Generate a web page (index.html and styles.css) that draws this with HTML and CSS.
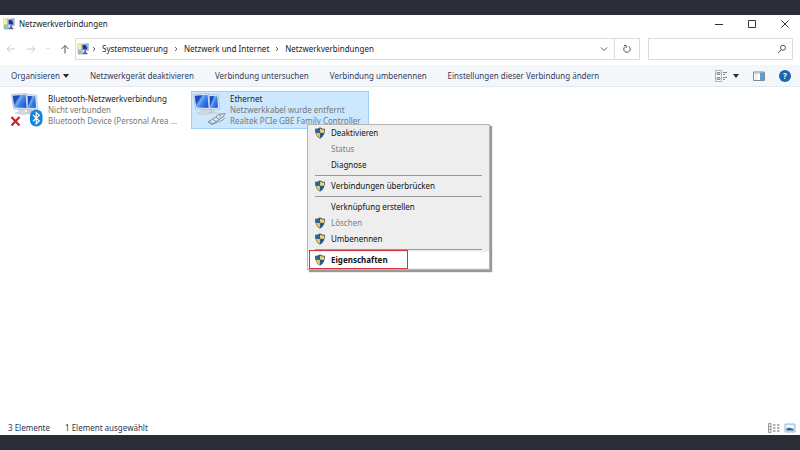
FILE: index.html
```
<!DOCTYPE html>
<html lang="de">
<head>
    <meta charset="utf-8">
    <title>Netzwerkverbindungen</title>
    <link rel="stylesheet" href="styles.css">
</head>
<body>
    <svg class="defs" width="0" height="0" aria-hidden="true">
        <defs>
            <linearGradient id="screen" x1="0" y1="0" x2="1" y2="0.600">
                <stop offset="0" stop-color="#1c4fc0"/>
                <stop offset="0.35" stop-color="#1848c0"/>
                <stop offset="0.5" stop-color="#79abf0"/>
                <stop offset="0.7" stop-color="#3b7ee6"/>
                <stop offset="1" stop-color="#2260dc"/>
            </linearGradient>
            <symbol id="shield" viewBox="0 0 12 12">
                <path d="M6 0.3C7.5 1.3 9.3 1.8 11 1.8C11.2 6.5 9.5 10 6 11.8C2.5 10 0.8 6.5 1 1.8C2.7 1.8 4.5 1.3 6 0.3Z" fill="#4c5b63"/>
                <path d="M5.9 1.4V5.8H1.9C1.8 4.8 1.8 3.7 1.9 2.7C3.4 2.6 4.8 2.2 5.9 1.4Z" fill="#2a669c"/>
                <path d="M6.1 1.4V5.8H10.1C10.2 4.8 10.2 3.7 10.1 2.7C8.6 2.6 7.2 2.2 6.1 1.4Z" fill="#ecd67c"/>
                <path d="M5.9 6.1V10.9C3.6 9.6 2.4 8 2 6.1Z" fill="#e6cd70"/>
                <path d="M6.1 6.1V10.9C8.4 9.6 9.6 8 10 6.1Z" fill="#235a8e"/>
            </symbol>
            <symbol id="network" viewBox="0 0 12 12">
                <path d="M0.300 0.800H5V7H0.300Z" fill="#f4efae" stroke="#c3c48c" stroke-width="0.500"/>
                <circle cx="3.200" cy="9" r="2.600" fill="#7eb3bb"/>
                <path d="M1.500 8.200L4 10.800M3.200 6.800L5 9" stroke="#e0f0e0" stroke-width="0.700"/>
                <path d="M4.600 1.200L11.400 0.400V7.800L4.600 7Z" fill="#c2d2e6" stroke="#8b9cb2" stroke-width="0.500"/>
                <path d="M5.600 2L10.200 1.500V6.700L5.600 6.200Z" fill="#1c3594"/>
                <path d="M8 1.800L10.200 1.500V4.500Z" fill="#86aeea"/>
                <path d="M7.200 7.500H9V9.400L10.500 10V11.200H5.500V10L7.200 9.400Z" fill="#4f6288"/>
            </symbol>
            <symbol id="computers" viewBox="0 0 34 36">
                <path d="M18 17.500H22L23 20L27 20.500L20 22L16 21Z" fill="#c9d0d8"/>
                <path d="M16 2.500L26.500 3L27.500 17L17 17.500Z" fill="#e3edf7" stroke="#9db3cc" stroke-width="0.700"/>
                <path d="M17.500 4L25.300 4.300L26 15.700L18 16Z" fill="url(#screen)"/>
                <path d="M9 17H14L15 20L20 21L14 22.800L5 21L9 20Z" fill="#d3d9e0" stroke="#b3bcc7" stroke-width="0.400"/>
                <path d="M1.500 2.500L16.500 1.500L18 17.500L3.500 17Z" fill="#e6eff8" stroke="#9db3cc" stroke-width="0.700"/>
                <path d="M2.600 3.700L15.500 2.800L16.700 15.900L4.400 15.500Z" fill="url(#screen)"/>
            </symbol>
        </defs>
    </svg>

    <div class="window">
        <header class="titlebar">
            <svg class="icon-app" viewBox="0 0 12 12"><use href="#network"/></svg>
            <h1>Netzwerkverbindungen</h1>
            <div class="window-buttons">
                <button type="button" aria-label="Minimieren"><svg viewBox="0 0 10 10"><path d="M1 5.500H9"/></svg></button>
                <button type="button" aria-label="Maximieren"><svg viewBox="0 0 10 10"><path d="M1.500 1.500H8.500V8.500H1.500Z"/></svg></button>
                <button type="button" aria-label="Schließen"><svg viewBox="0 0 10 10"><path d="M1.500 1.500L8.500 8.500M8.500 1.500L1.500 8.500"/></svg></button>
            </div>
        </header>

        <nav class="navbar">
            <div class="nav-buttons">
                <button type="button" class="off" aria-label="Zurück"><svg viewBox="0 0 10 10"><path d="M9 5H1M4.500 1.500L1 5L4.500 8.500"/></svg></button>
                <button type="button" class="off" aria-label="Vorwärts"><svg viewBox="0 0 10 10"><path d="M1 5H9M5.500 1.500L9 5L5.500 8.500"/></svg></button>
                <button type="button" class="off recent" aria-label="Verlauf"><svg viewBox="0 0 4 10"><path d="M0.500 4L2 5.500L3.500 4"/></svg></button>
                <button type="button" aria-label="Nach oben"><svg viewBox="0 0 10 10"><path d="M5 9.500V1.500M1.500 5L5 1.500L8.500 5"/></svg></button>
            </div>
            <div class="address">
                <svg class="icon-app" viewBox="0 0 12 12"><use href="#network"/></svg>
                <svg class="chevron" viewBox="0 0 6 6"><path d="M2 1L4 3L2 5"/></svg>
                <a href="#">Systemsteuerung</a>
                <svg class="chevron" viewBox="0 0 6 6"><path d="M2 1L4 3L2 5"/></svg>
                <a href="#">Netzwerk und Internet</a>
                <svg class="chevron" viewBox="0 0 6 6"><path d="M2 1L4 3L2 5"/></svg>
                <a href="#">Netzwerkverbindungen</a>
                <button type="button" class="drop" aria-label="Vorherige Orte"><svg viewBox="0 0 10 10"><path d="M2 3.500L5 6.500L8 3.500"/></svg></button>
                <button type="button" class="refresh" aria-label="Aktualisieren"><svg viewBox="0 0 10 10"><path d="M6.500 2.300A3.200 3.200 0 1 1 3 2.600M2 1.500H4.200V4"/></svg></button>
            </div>
            <div class="search">
                <input type="search" aria-label="Durchsuchen">
                <svg viewBox="0 0 10 10"><circle cx="6" cy="3.800" r="2.500"/><path d="M4.200 5.700L1 9"/></svg>
            </div>
        </nav>

        <div class="toolbar">
            <button type="button" class="organize">Organisieren <svg class="caret" viewBox="0 0 6 4"><path d="M0 0H6L3 4Z"/></svg></button>
            <button type="button">Netzwerkgerät deaktivieren</button>
            <button type="button">Verbindung untersuchen</button>
            <button type="button">Verbindung umbenennen</button>
            <button type="button">Einstellungen dieser Verbindung ändern</button>
            <div class="views">
                <button type="button" aria-label="Ansicht ändern">
                    <svg class="icon-view" viewBox="0 0 12 12">
                        <path d="M0.500 0.500H6.500V11.500H0.500Z" fill="#fff" stroke="#a9b2ba"/>
                        <path d="M2 2.500H5V4.500H2ZM2 7.500H5V9.500H2Z" fill="#bcd3e6" stroke="#6f8496" stroke-width="0.8"/>
                        <path d="M8 2.500H12M8 4.500H10M8 7.500H12M8 9.500H10" stroke="#777" stroke-width="0.9"/>
                    </svg>
                </button>
                <button type="button" aria-label="Weitere Optionen"><svg class="caret" viewBox="0 0 6 4"><path d="M0 0H6L3 4Z"/></svg></button>
                <button type="button" class="preview" aria-label="Vorschaufenster">
                    <svg class="icon-view" viewBox="0 0 12 10">
                        <path d="M0.500 1H11.500V9.500H0.500Z" fill="#fff" stroke="#7b8b9a"/>
                        <path d="M1 2.300H7" stroke="#a9c0d4" stroke-width="0.7"/>
                        <path d="M3 2.300V9" stroke="#b4c6d6" stroke-width="0.7"/>
                        <path d="M7 1.500H11V9H7Z" fill="#5b9dd0"/>
                    </svg>
                </button>
                <button type="button" class="help" aria-label="Hilfe">?</button>
            </div>
        </div>

        <main class="connections">
            <article class="connection">
                <svg class="icon-connection" viewBox="0 0 34 36">
                    <use href="#computers"/>
                    <path d="M1.500 25L9.500 33.500M9.500 25L1.500 33.500" stroke="#c8232c" stroke-width="2.200"/>
                    <rect x="20" y="17.500" width="12.500" height="17" rx="6.200" fill="#1583dc"/>
                    <path d="M23 23L29.300 29L26.200 31.800V20.500L29.300 23.200L23 29.200" fill="none" stroke="#fff" stroke-width="1.200"/>
                </svg>
                <div class="info">
                    <h2>Bluetooth-Netzwerkverbindung</h2>
                    <p>Nicht verbunden</p>
                    <p>Bluetooth Device (Personal Area ...</p>
                </div>
            </article>
            <article class="connection selected">
                <svg class="icon-connection" viewBox="0 0 34 36">
                    <use href="#computers"/>
                    <path d="M16 30L24 25L27 27.500L20 32.500ZM24 25L26 22.500L33 21.500L31 25L27 27.500" fill="#dce6ec" stroke="#77868f" stroke-width="0.900"/>
                    <path d="M18 29.800L20.500 31.500M21 27.600L24 29.600M28 22.500V25.500M20 32.500L31 28L33 25.500" fill="none" stroke="#77868f" stroke-width="0.800"/>
                </svg>
                <div class="info">
                    <h2>Ethernet</h2>
                    <p>Netzwerkkabel wurde entfernt</p>
                    <p>Realtek PCIe GBE Family Controller</p>
                </div>
            </article>
        </main>

        <footer class="statusbar">
            <span>3 Elemente</span>
            <span>1 Element ausgewählt</span>
            <div class="status-views">
                <button type="button" aria-label="Details">
                    <svg viewBox="0 0 12 10">
                        <path d="M0.500 0.500H3V9.500H0.500ZM0.500 3.500H3M0.500 6.500H3" fill="#e8e8e8" stroke="#8c8c8c" stroke-width="0.800"/>
                        <path d="M5 2H7.500M9 2H11.500M5 5H7.500M9 5H11.500M5 8H7.500M9 8H11.500" stroke="#666"/>
                    </svg>
                </button>
                <button type="button" aria-label="Große Symbole">
                    <svg viewBox="0 0 12 10">
                        <path d="M1 1H11V9H1Z" fill="#cfe6f7" stroke="#9cc0dc"/>
                        <path d="M2.500 2.500H9.500V5H2.500Z" fill="#fff"/>
                        <path d="M2.500 7.500V5.500L5 4.500L9.500 6V7.500Z" fill="#34658c"/>
                    </svg>
                </button>
            </div>
        </footer>
    </div>

    <div class="menu" role="menu">
        <button type="button" role="menuitem"><svg viewBox="0 0 12 12"><use href="#shield"/></svg>Deaktivieren</button>
        <button type="button" role="menuitem" disabled>Status</button>
        <button type="button" role="menuitem">Diagnose</button>
        <hr>
        <button type="button" role="menuitem"><svg viewBox="0 0 12 12"><use href="#shield"/></svg>Verbindungen überbrücken</button>
        <hr>
        <button type="button" role="menuitem">Verknüpfung erstellen</button>
        <button type="button" role="menuitem" disabled><svg viewBox="0 0 12 12"><use href="#shield"/></svg>Löschen</button>
        <button type="button" role="menuitem"><svg viewBox="0 0 12 12"><use href="#shield"/></svg>Umbenennen</button>
        <hr>
        <button type="button" role="menuitem" class="active"><svg viewBox="0 0 12 12"><use href="#shield"/></svg>Eigenschaften</button>
    </div>
</body>
</html>
```
FILE: styles.css
```
* {
    box-sizing: border-box;
}
body {
    margin: 0;
    min-height: 100vh;
    display: flex;
    flex-direction: column;
    position: relative;
    padding: 15px 0;
    background: #2a2d35;
    color: #1a1a1a;
    font-family: "Noto Sans", "Open Sans", sans-serif;
    font-size: 8px;
    line-height: 12px;
}
h1, h2, p {
    margin: 0;
    font-size: inherit;
    font-weight: normal;
}
button {
    display: flex;
    align-items: center;
    padding: 0;
    border: none;
    background: none;
    color: inherit;
    font: inherit;
    white-space: nowrap;
}
a {
    color: inherit;
    text-decoration: none;
}
svg {
    display: block;
    flex: none;
}
.defs {
    position: absolute;
}
.window {
    flex: 1;
    display: flex;
    flex-direction: column;
    background: #fff;
}
.icon-app {
    width: 12px;
    height: 12px;
}

/* title bar */
.titlebar {
    display: flex;
    align-items: center;
    gap: 4px;
    height: 18px;
    padding: 0 10px 0 3px;
}
.window-buttons {
    display: flex;
    gap: 23px;
    margin-left: auto;
}
.window-buttons svg {
    width: 10px;
    height: 10px;
    fill: none;
    stroke: #333;
}

/* address row */
.navbar {
    display: flex;
    align-items: center;
    padding: 5px 7px 5px 6px;
}
.nav-buttons {
    display: flex;
    gap: 10px;
    padding-right: 5px;
}
.nav-buttons svg,
.address button svg,
.search svg {
    width: 10px;
    height: 10px;
    fill: none;
    stroke: #555;
}
.nav-buttons .off svg {
    stroke: #ccc;
}
.nav-buttons .recent svg {
    width: 4px;
}
.address {
    flex: 1;
    display: flex;
    align-items: center;
    height: 22px;
    padding-left: 1px;
    border: 1px solid #dcdcdc;
}
.chevron {
    width: 6px;
    height: 6px;
    margin: 0 5px;
    fill: none;
    stroke: #666;
}
.icon-app + .chevron {
    margin-left: 2px;
}
.drop {
    margin-left: auto;
    padding-right: 5px;
}
.refresh {
    height: 100%;
    padding: 0 7px;
    border-left: 1px solid #dcdcdc;
}
.search {
    display: flex;
    align-items: center;
    width: 145px;
    height: 22px;
    margin-left: 8px;
    padding-right: 5px;
    border: 1px solid #dcdcdc;
}
.search input {
    flex: 1;
    min-width: 0;
    border: none;
    font: inherit;
}

/* command bar */
.toolbar {
    display: flex;
    align-items: center;
    gap: 21px;
    height: 22px;
    padding: 0 9px 0 11px;
    border-bottom: 1px solid #e2e9ef;
    background: #f4f7fa;
    color: #323a5c;
}
.organize {
    gap: 3px;
}
.caret {
    width: 6px;
    height: 4px;
    fill: #22263a;
}
.icon-view {
    width: 12px;
    height: 12px;
}
.views {
    display: flex;
    align-items: center;
    gap: 6px;
    margin-left: auto;
}
.preview {
    margin: 0 8px;
}
.help {
    justify-content: center;
    width: 12px;
    height: 12px;
    border-radius: 50%;
    background: #1766ae;
    color: #fff;
    font-weight: bold;
}

/* connections */
.connections {
    flex: 1;
    display: flex;
    align-items: flex-start;
    gap: 4px;
    padding: 4px 9px;
}
.connection {
    display: flex;
    gap: 4px;
    width: 178px;
    height: 38px;
    border: 1px solid transparent;
    color: #777;
    line-height: 11px;
    white-space: nowrap;
}
.connection h2 {
    color: #222;
}
.icon-connection {
    width: 34px;
    height: 36px;
}
.info {
    padding-top: 1px;
    overflow: hidden;
}
.selected {
    border-color: #9dd0f8;
    background: #cce8ff;
}

/* status bar */
.statusbar {
    display: flex;
    align-items: center;
    gap: 15px;
    height: 14px;
    padding: 0 4px 0 8px;
    color: #2c3550;
}
.status-views {
    display: flex;
    gap: 4px;
    margin-left: auto;
}
.status-views svg {
    width: 12px;
    height: 10px;
}

/* context menu */
.menu {
    position: absolute;
    top: 124px;
    left: 307px;
    width: 183px;
    padding-bottom: 1px;
    border: 1px solid #b4b4b4;
    background: #eee;
    box-shadow: 2px 2px 1px #999;
    color: #111;
}
.menu button {
    position: relative;
    width: 100%;
    height: 16px;
    padding-left: 23px;
}
.menu button:disabled {
    color: #808080;
}
.menu button svg {
    width: 12px;
    height: 12px;
    margin: 0 5px 0 -17px;
}
.menu hr {
    height: 1px;
    margin: 2px 7px;
    border: none;
    background: #999;
}
.menu .active {
    background: #fff;
    font-weight: bold;
}
/* red frame round the entry to click */
.menu .active::after {
    content: "";
    position: absolute;
    inset: -2px auto -1px 1px;
    width: 97px;
    border: 1px solid #d0343e;
}
```
